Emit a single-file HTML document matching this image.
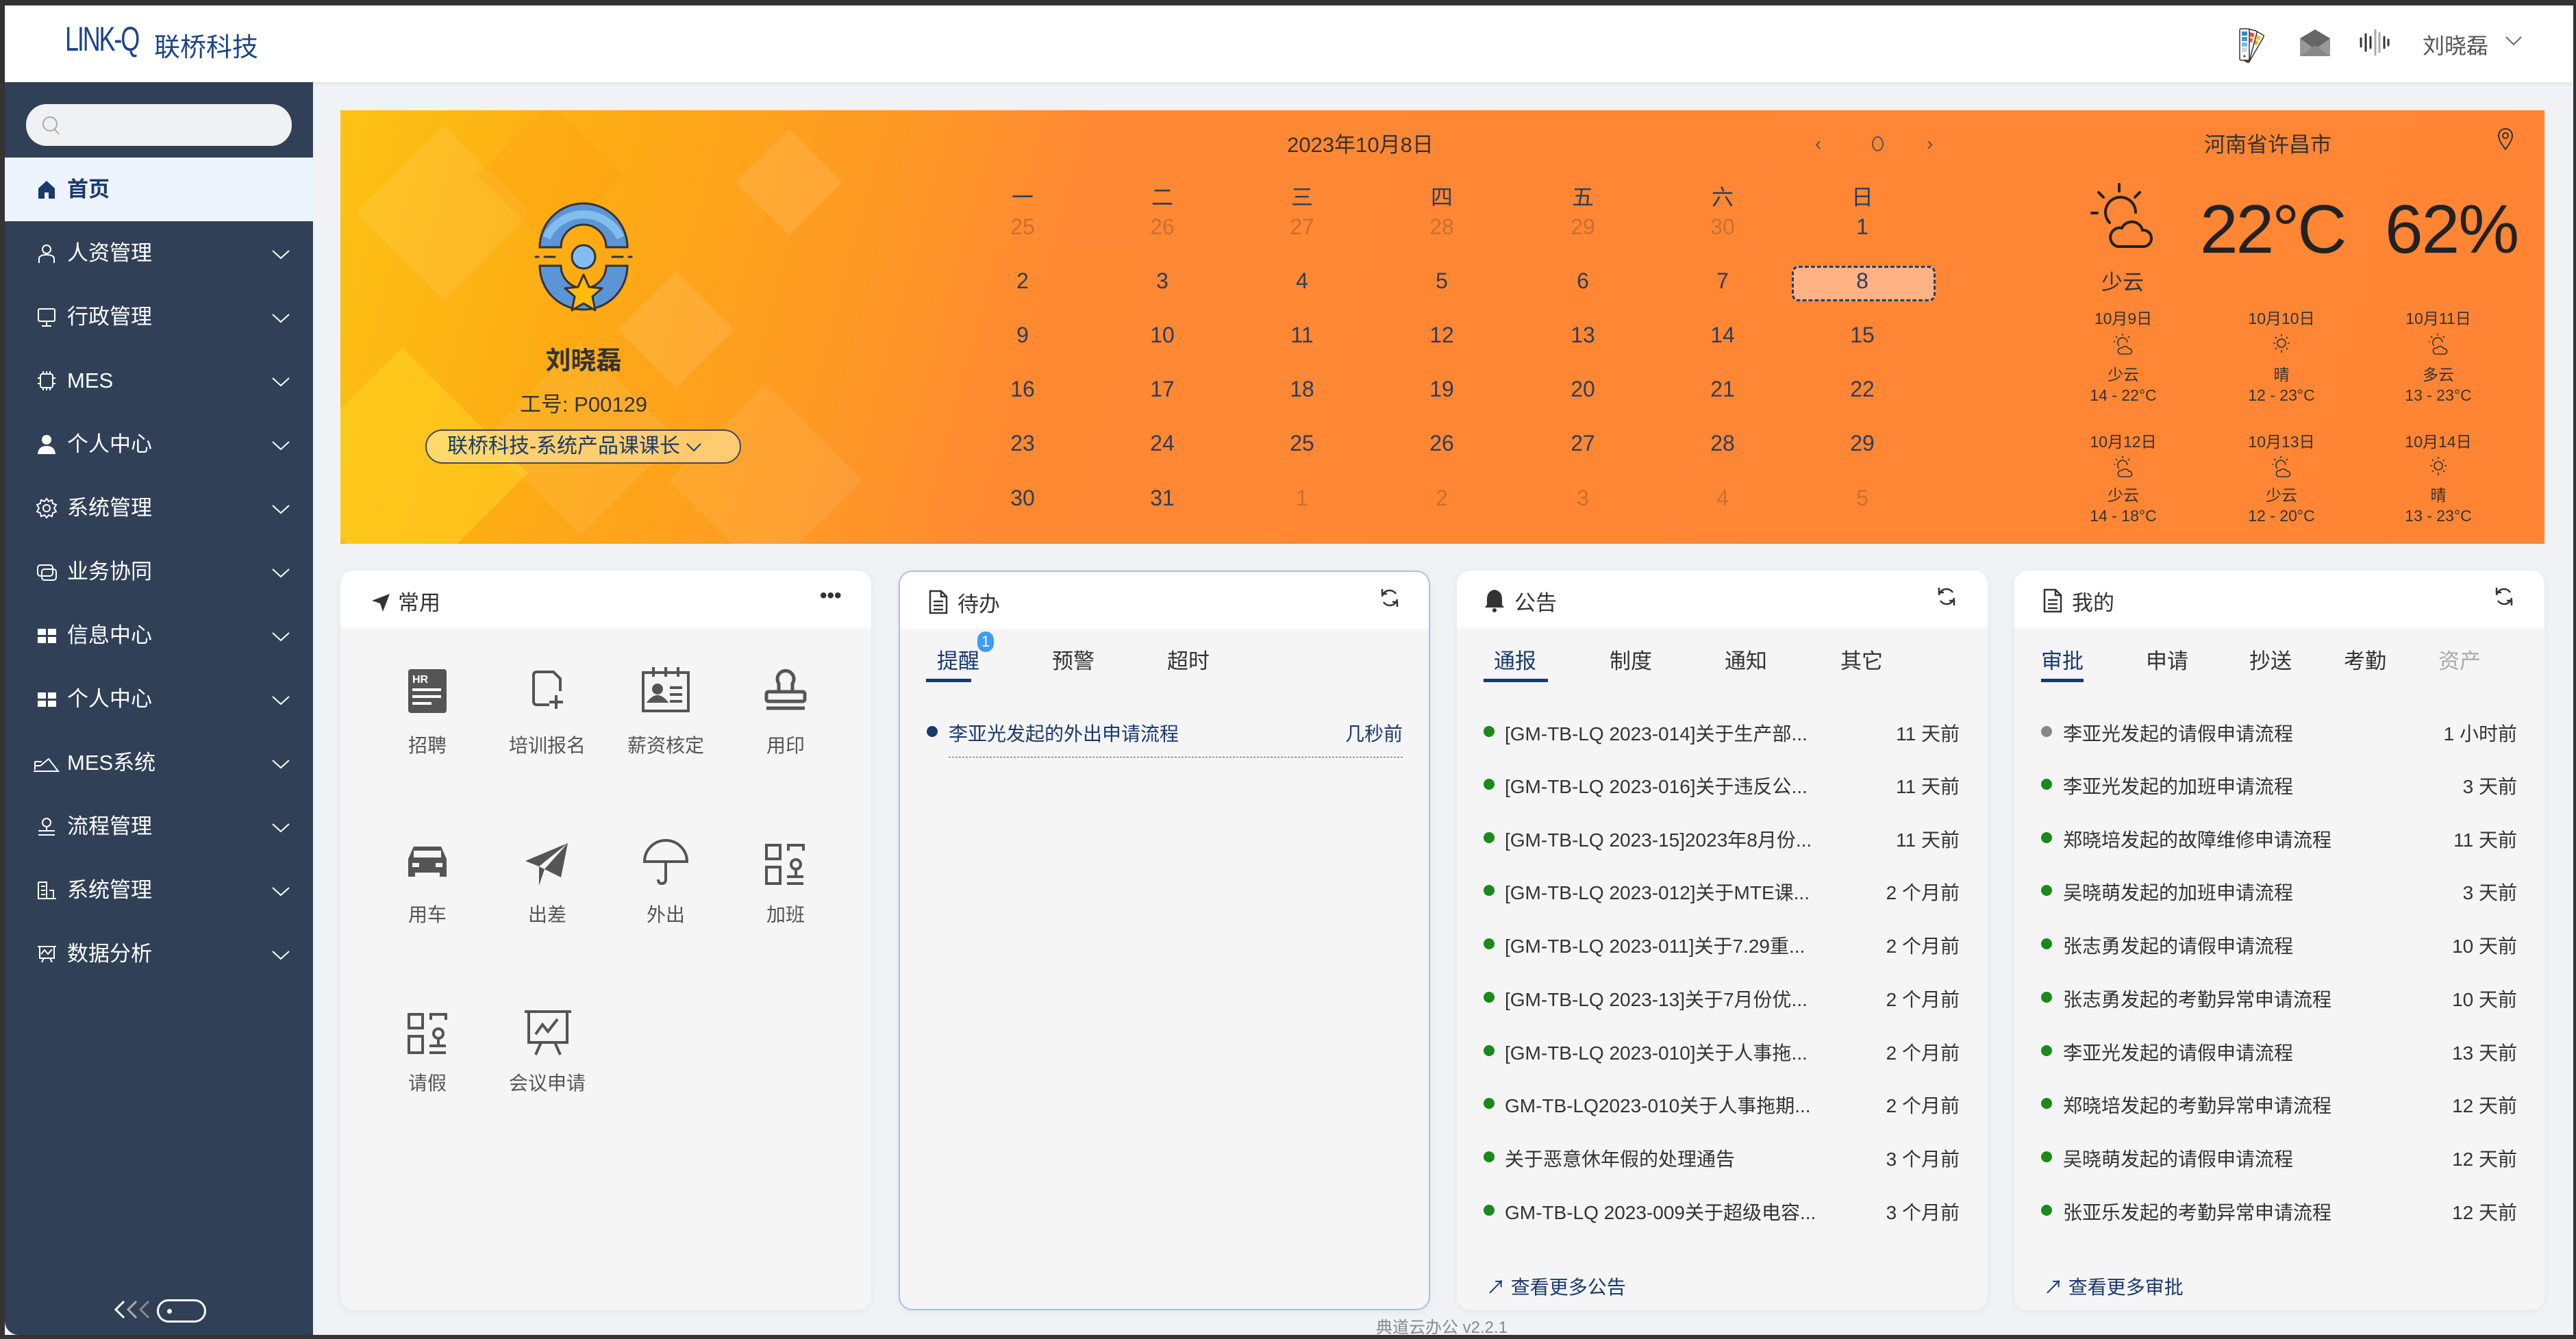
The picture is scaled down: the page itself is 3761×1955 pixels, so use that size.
<!DOCTYPE html>
<html><head><meta charset="utf-8"><style>
*{margin:0;padding:0;box-sizing:border-box}
body{width:3761px;height:1955px;background:#333;position:relative;overflow:hidden;font-family:"Liberation Sans","Noto Sans CJK SC",sans-serif;color:#333}
.a{position:absolute}
#hdr{left:7px;top:8px;width:3750px;height:112px;background:#fff;box-shadow:0 2px 6px rgba(0,0,0,.08);z-index:2}
#main{left:7px;top:120px;width:3750px;height:1829px;background:#f0f2f5}
#side{left:7px;top:120px;width:450px;height:1829px;background:#304057;border-bottom-left-radius:20px}
.mi{position:absolute;left:0;width:450px;height:93px;color:#fff;font-size:31px;line-height:93px}
.mi .t{position:absolute;left:91px}
.mi .ic{position:absolute;left:45px;top:31px;width:32px;height:32px}
.mi .ch{position:absolute;left:390px;top:42px;width:26px;height:14px}
.cal{position:absolute;width:120px;text-align:center;font-size:32px;color:#2c3e5c;margin-left:-60px}
.om{color:#c9702e}
.card{position:absolute;top:833px;height:1080px;background:#f5f5f5;border-radius:20px;box-shadow:0 2px 10px rgba(0,0,0,.06);overflow:hidden}
.ch1{position:absolute;left:0;top:0;right:0;height:83px;background:#fff}
.ttl{position:absolute;left:84px;top:22px;font-size:31px;color:#333}
.tab{position:absolute;top:940px;font-size:31px;color:#333}
.row{position:absolute;font-size:28px;color:#333;white-space:nowrap}
.dot{position:absolute;width:16px;height:16px;border-radius:50%;background:#1a8a1a}
.tm{position:absolute;font-size:28px;color:#333;text-align:right;white-space:nowrap}
.gi{position:absolute;width:160px;text-align:center;font-size:28px;color:#555;margin-left:-80px}
.wf{position:absolute;width:160px;margin-left:-80px;text-align:center;font-size:23px;color:#333}
.wi{position:absolute;margin-left:-15px}
</style></head><body>
<div id="hdr" class="a">
 <div class="a" style="left:88px;top:20px;font-size:50px;color:#1c4488;letter-spacing:-3px;transform:scaleX(.72);transform-origin:left">LINK-Q</div>
 <div class="a" style="left:218px;top:30px;font-size:38px;color:#1c4488;">联桥科技</div>
 <svg class="a" style="left:3259px;top:30px" width="48" height="56" viewBox="0 0 48 56"><g transform="rotate(30 10 50)"><rect x="4" y="4" width="14" height="46" rx="2" fill="#fff" stroke="#333" stroke-width="1.5"/><rect x="7" y="8" width="8" height="6" fill="#f4c430"/><rect x="7" y="16" width="8" height="6" fill="#f4a300"/></g><g transform="rotate(15 10 50)"><rect x="4" y="4" width="14" height="46" rx="2" fill="#fff" stroke="#333" stroke-width="1.5"/><rect x="7" y="8" width="8" height="6" fill="#e8542a"/><rect x="7" y="16" width="8" height="6" fill="#ea6b3a"/></g><rect x="4" y="4" width="14" height="46" rx="2" fill="#fff" stroke="#333" stroke-width="1.5"/><rect x="7" y="8" width="8" height="6" fill="#2e8ad8"/><rect x="7" y="16" width="8" height="6" fill="#3d97de"/><rect x="7" y="24" width="8" height="6" fill="#7ab8ec"/><rect x="7" y="32" width="8" height="6" fill="#c9d8e6"/><circle cx="11" cy="44" r="1.5" fill="#333"/></svg>
 <svg class="a" style="left:3350px;top:34px" width="46" height="42" viewBox="0 0 46 42"><path d="M1 14 L23 1 L45 14 V40 H1 Z" fill="#666"/><path d="M1 14 L23 30 L45 14 V40 H1Z" fill="#999"/><path d="M1 40 L23 24 L45 40Z" fill="#888"/></svg>
 <svg class="a" style="left:3438px;top:34px" width="44" height="40" viewBox="0 0 44 40"><g stroke="#333" stroke-width="3" stroke-linecap="round"><line x1="2" y1="14" x2="2" y2="26"/><line x1="9" y1="8" x2="9" y2="32"/><line x1="16" y1="12" x2="16" y2="28"/><line x1="36" y1="12" x2="36" y2="28"/><line x1="42" y1="16" x2="42" y2="24"/></g><g stroke="#aaa" stroke-width="3" stroke-linecap="round"><line x1="23" y1="2" x2="23" y2="38"/><line x1="29" y1="6" x2="29" y2="34"/></g></svg>
 <div class="a" style="left:3530px;top:34px;font-size:32px;color:#555">刘晓磊</div>
 <svg class="a" style="left:3650px;top:44px" width="26" height="16"><path d="M2 2 L13 13 L24 2" fill="none" stroke="#666" stroke-width="2"/></svg>
</div>
<div id="main" class="a"></div>
<div id="side" class="a">
 <div class="a" style="left:31px;top:32px;width:388px;height:61px;background:#f0f1f3;border-radius:30px"></div>
 <svg class="a" style="left:53px;top:48px" width="30" height="32"><circle cx="13" cy="13" r="10" fill="none" stroke="#aaa" stroke-width="2"/><line x1="20" y1="21" x2="26" y2="28" stroke="#aaa" stroke-width="2"/></svg>
 <div class="mi" style="top:110px;background:#eef4fd;color:#1a3a6e;font-weight:bold"><svg class="ic" viewBox="0 0 32 32"><path d="M4 14 L16 3 L28 14 V29 H19 V20 H13 V29 H4Z" fill="#1a3a6e"/></svg><span class="t">首页</span></div>
</div>
<div class="a" style="left:7px;top:120px;width:450px;height:1829px">
 <div class="mi" style="top:203px"><svg class="ic" viewBox="0 0 32 32" fill="none" stroke="#fff" stroke-width="2"><circle cx="16" cy="10" r="6"/><path d="M5 30 V24 Q5 18 16 18 Q27 18 27 24 V30"/></svg><span class="t">人资管理</span><svg class="ch"><path d="M1 1 L13 12 L25 1" fill="none" stroke="#fff" stroke-width="2"/></svg></div>
 <div class="mi" style="top:296px"><svg class="ic" viewBox="0 0 32 32" fill="none" stroke="#fff" stroke-width="2"><rect x="4" y="4" width="24" height="18" rx="2"/><path d="M16 22 V28 M9 29 H23"/></svg><span class="t">行政管理</span><svg class="ch"><path d="M1 1 L13 12 L25 1" fill="none" stroke="#fff" stroke-width="2"/></svg></div>
 <div class="mi" style="top:389px"><svg class="ic" viewBox="0 0 32 32" fill="none" stroke="#fff" stroke-width="2"><rect x="7" y="6" width="18" height="20" rx="3"/><path d="M11 2V6M16 2V6M21 2V6M11 26V30M16 26V30M21 26V30M3 12H7M3 20H7M25 12H29M25 20H29"/></svg><span class="t">MES</span><svg class="ch"><path d="M1 1 L13 12 L25 1" fill="none" stroke="#fff" stroke-width="2"/></svg></div>
 <div class="mi" style="top:482px"><svg class="ic" viewBox="0 0 32 32" fill="#fff"><circle cx="16" cy="9" r="7"/><path d="M3 30 Q4 18 16 18 Q28 18 29 30Z"/></svg><span class="t">个人中心</span><svg class="ch"><path d="M1 1 L13 12 L25 1" fill="none" stroke="#fff" stroke-width="2"/></svg></div>
 <div class="mi" style="top:575px"><svg class="ic" viewBox="0 0 32 32" fill="none" stroke="#fff" stroke-width="2"><circle cx="16" cy="16" r="5"/><path d="M16 2 L19 6 L24 4 L25 9 L30 11 L27 16 L30 21 L25 23 L24 28 L19 26 L16 30 L13 26 L8 28 L7 23 L2 21 L5 16 L2 11 L7 9 L8 4 L13 6Z"/></svg><span class="t">系统管理</span><svg class="ch"><path d="M1 1 L13 12 L25 1" fill="none" stroke="#fff" stroke-width="2"/></svg></div>
 <div class="mi" style="top:668px"><svg class="ic" viewBox="0 0 32 32" fill="none" stroke="#fff" stroke-width="2"><rect x="3" y="6" width="22" height="16" rx="4"/><rect x="9" y="12" width="21" height="16" rx="4"/></svg><span class="t">业务协同</span><svg class="ch"><path d="M1 1 L13 12 L25 1" fill="none" stroke="#fff" stroke-width="2"/></svg></div>
 <div class="mi" style="top:761px"><svg class="ic" viewBox="0 0 32 32" fill="#fff"><rect x="3" y="6" width="12" height="9"/><rect x="18" y="6" width="12" height="9"/><rect x="3" y="18" width="12" height="9"/><rect x="18" y="18" width="12" height="9"/></svg><span class="t">信息中心</span><svg class="ch"><path d="M1 1 L13 12 L25 1" fill="none" stroke="#fff" stroke-width="2"/></svg></div>
 <div class="mi" style="top:854px"><svg class="ic" viewBox="0 0 32 32" fill="#fff"><rect x="3" y="6" width="12" height="9"/><rect x="18" y="6" width="12" height="9"/><rect x="3" y="18" width="12" height="9"/><rect x="18" y="18" width="12" height="9"/></svg><span class="t">个人中心</span><svg class="ch"><path d="M1 1 L13 12 L25 1" fill="none" stroke="#fff" stroke-width="2"/></svg></div>
 <div class="mi" style="top:947px"><svg class="ic" viewBox="0 0 40 32" style="left:40px;width:40px" fill="none" stroke="#fff" stroke-width="2"><path d="M2 28 H38 L24 10 L12 20 M4 14 H14 M4 20 H12 M4 26 V14"/></svg><span class="t">MES系统</span><svg class="ch"><path d="M1 1 L13 12 L25 1" fill="none" stroke="#fff" stroke-width="2"/></svg></div>
 <div class="mi" style="top:1040px"><svg class="ic" viewBox="0 0 32 32" fill="none" stroke="#fff" stroke-width="2"><circle cx="16" cy="10" r="6"/><path d="M16 16 V22 M4 22 H28 M4 28 H28"/></svg><span class="t">流程管理</span><svg class="ch"><path d="M1 1 L13 12 L25 1" fill="none" stroke="#fff" stroke-width="2"/></svg></div>
 <div class="mi" style="top:1133px"><svg class="ic" viewBox="0 0 32 32" fill="none" stroke="#fff" stroke-width="2"><path d="M4 4 V28 H30 M4 4 H16 V28 M8 10 H14 M8 16 H14 M8 22 H14 M20 16 H26 V28"/></svg><span class="t">系统管理</span><svg class="ch"><path d="M1 1 L13 12 L25 1" fill="none" stroke="#fff" stroke-width="2"/></svg></div>
 <div class="mi" style="top:1226px"><svg class="ic" viewBox="0 0 32 32" fill="none" stroke="#fff" stroke-width="2"><path d="M3 5 H30 M6 5 V22 H27 V5 M8 16 L13 10 L18 16 L24 9 M12 22 L9 28 M21 22 L24 28"/></svg><span class="t">数据分析</span><svg class="ch"><path d="M1 1 L13 12 L25 1" fill="none" stroke="#fff" stroke-width="2"/></svg></div>
 <svg class="a" style="left:158px;top:1777px" width="60" height="30" fill="none" stroke-width="3"><path d="M16 3 L4 15 L16 27" stroke="#fff"/><path d="M34 3 L22 15 L34 27" stroke="#aaa"/><path d="M52 3 L40 15 L52 27" stroke="#888"/></svg>
 <div class="a" style="left:222px;top:1777px;width:72px;height:34px;border:3px solid #fff;border-radius:17px"><div class="a" style="left:12px;top:11px;width:7px;height:7px;border-radius:50%;background:#fff"></div></div>
</div>

<!-- banner -->
<div class="a" style="left:497px;top:161px;width:3218px;height:633px;overflow:hidden;background:linear-gradient(105deg,#fdc214 0%,#fdab14 12%,#fe9a24 24%,#ff8834 33%,#ff8534 100%)">
 <div class="a" style="left:60px;top:60px;width:180px;height:180px;transform:rotate(45deg);background:rgba(255,255,255,.08)"></div>
 <div class="a" style="left:230px;top:20px;width:150px;height:150px;transform:rotate(45deg);background:rgba(255,160,20,.3)"></div>
 <div class="a" style="left:430px;top:260px;width:120px;height:120px;transform:rotate(45deg);background:rgba(255,255,255,.1)"></div>
 <div class="a" style="left:600px;top:50px;width:110px;height:110px;transform:rotate(45deg);background:rgba(255,255,255,.1)"></div>
 <div class="a" style="left:-40px;top:400px;width:260px;height:260px;transform:rotate(45deg);background:rgba(255,230,40,.35)"></div>
 <div class="a" style="left:520px;top:440px;width:200px;height:200px;transform:rotate(45deg);background:rgba(255,255,255,.07)"></div>
 <div class="a" style="left:250px;top:380px;width:200px;height:200px;transform:rotate(45deg);background:rgba(255,255,255,.07)"></div>
 <div class="a" style="left:900px;top:200px;width:220px;height:400px;transform:skewX(-15deg);background:rgba(255,140,40,.25)"></div>
</div>
<svg class="a" style="left:752px;top:273px" width="200" height="200" viewBox="0 0 200 200">
 <path d="M36 88 A64 64 0 0 1 164 88 H133 A33 33 0 0 0 67 88Z" fill="#5b95d5" stroke="#333" stroke-width="3"/>
 <path d="M46 74 A60 60 0 0 1 154 74" fill="none" stroke="#82bdef" stroke-width="12"/>
 <path d="M36 115 A64 64 0 0 0 164 115 H133 A33 33 0 0 1 67 115Z" fill="#5b95d5" stroke="#333" stroke-width="3"/>
 <circle cx="100" cy="102" r="17" fill="#82bdef" stroke="#333" stroke-width="3"/>
 <path d="M30 102H34M43 102H58M142 102H157M166 102H170" stroke="#333" stroke-width="3" stroke-linecap="round"/>
 <path d="M100 128 L108 146 L127 148 L113 160 L117 180 L100 170 L83 180 L87 160 L73 148 L92 146Z" fill="#fcbc07" stroke="#333" stroke-width="3" stroke-linejoin="round"/>
</svg>
<div class="a" style="left:752px;top:496px;width:200px;text-align:center;font-size:37px;font-weight:bold;color:#333">刘晓磊</div>
<div class="a" style="left:702px;top:565px;width:300px;text-align:center;font-size:31px;color:#333">工号: P00129</div>
<div class="a" style="left:621px;top:627px;width:461px;height:50px;border:2px solid #3a4a6a;border-radius:25px;background:rgba(255,235,170,.55);font-size:30px;color:#1a3a6e;line-height:46px;padding-left:30px">联桥科技-系统产品课课长 <svg width="24" height="16"><path d="M2 3 L12 13 L22 3" fill="none" stroke="#1a3a6e" stroke-width="2"/></svg></div>

<!-- calendar -->
<div class="a" style="left:1836px;top:186px;width:300px;text-align:center;font-size:31px;color:#333">2023年10月8日</div>
<div class="a" style="left:2650px;top:194px;font-size:28px;color:#555">‹</div>
<div class="a" style="left:2733px;top:199px;width:17px;height:22px;border:2px solid #555;border-radius:50%"></div>
<div class="a" style="left:2813px;top:194px;font-size:28px;color:#555">›</div>
<div class="a" style="left:2616px;top:388px;width:210px;height:52px;background:#ffb385;border:3px dashed #2c3e5c;border-radius:10px"></div>
<div class="a" style="left:0;top:0">
<div class="cal" style="left:1493px;top:263px">一</div><div class="cal" style="left:1697px;top:263px">二</div><div class="cal" style="left:1901px;top:263px">三</div><div class="cal" style="left:2105px;top:263px">四</div><div class="cal" style="left:2311px;top:263px">五</div><div class="cal" style="left:2515px;top:263px">六</div><div class="cal" style="left:2719px;top:263px">日</div>
<div class="cal om" style="left:1493px;top:313px">25</div><div class="cal om" style="left:1697px;top:313px">26</div><div class="cal om" style="left:1901px;top:313px">27</div><div class="cal om" style="left:2105px;top:313px">28</div><div class="cal om" style="left:2311px;top:313px">29</div><div class="cal om" style="left:2515px;top:313px">30</div><div class="cal" style="left:2719px;top:313px">1</div>
<div class="cal" style="left:1493px;top:392px">2</div><div class="cal" style="left:1697px;top:392px">3</div><div class="cal" style="left:1901px;top:392px">4</div><div class="cal" style="left:2105px;top:392px">5</div><div class="cal" style="left:2311px;top:392px">6</div><div class="cal" style="left:2515px;top:392px">7</div><div class="cal" style="left:2719px;top:392px">8</div>
<div class="cal" style="left:1493px;top:471px">9</div><div class="cal" style="left:1697px;top:471px">10</div><div class="cal" style="left:1901px;top:471px">11</div><div class="cal" style="left:2105px;top:471px">12</div><div class="cal" style="left:2311px;top:471px">13</div><div class="cal" style="left:2515px;top:471px">14</div><div class="cal" style="left:2719px;top:471px">15</div>
<div class="cal" style="left:1493px;top:550px">16</div><div class="cal" style="left:1697px;top:550px">17</div><div class="cal" style="left:1901px;top:550px">18</div><div class="cal" style="left:2105px;top:550px">19</div><div class="cal" style="left:2311px;top:550px">20</div><div class="cal" style="left:2515px;top:550px">21</div><div class="cal" style="left:2719px;top:550px">22</div>
<div class="cal" style="left:1493px;top:629px">23</div><div class="cal" style="left:1697px;top:629px">24</div><div class="cal" style="left:1901px;top:629px">25</div><div class="cal" style="left:2105px;top:629px">26</div><div class="cal" style="left:2311px;top:629px">27</div><div class="cal" style="left:2515px;top:629px">28</div><div class="cal" style="left:2719px;top:629px">29</div>
<div class="cal" style="left:1493px;top:709px">30</div><div class="cal" style="left:1697px;top:709px">31</div><div class="cal om" style="left:1901px;top:709px">1</div><div class="cal om" style="left:2105px;top:709px">2</div><div class="cal om" style="left:2311px;top:709px">3</div><div class="cal om" style="left:2515px;top:709px">4</div><div class="cal om" style="left:2719px;top:709px">5</div>
</div>

<!-- weather -->
<div class="a" style="left:3161px;top:186px;width:300px;text-align:center;font-size:31px;color:#333">河南省许昌市</div>
<svg class="a" style="left:3645px;top:186px" width="26" height="34"><path d="M13 32 C4 20 3 16 3 12 A10 10 0 0 1 23 12 C23 16 22 20 13 32Z" fill="none" stroke="#333" stroke-width="2"/><circle cx="13" cy="12" r="4" fill="none" stroke="#333" stroke-width="2"/></svg>
<svg class="a" style="left:3050px;top:265px" width="100" height="100" viewBox="0 0 100 100" fill="none" stroke="#222" stroke-width="4" stroke-linecap="round"><path d="M30 60 A22 22 0 1 1 68 45"/><path d="M44 4V14M14 16L21 23M74 16L67 23M4 46H12"/><path d="M42 95 H80 A12 12 0 0 0 78 71 A16 16 0 0 0 48 68 A13 13 0 0 0 42 95Z"/></svg>
<div class="a" style="left:3212px;top:278px;font-size:100px;color:#222;letter-spacing:-3px">22°C</div>
<div class="a" style="left:3482px;top:278px;font-size:100px;color:#222;letter-spacing:-2px">62%</div>
<div class="a" style="left:3068px;top:387px;font-size:31px;color:#333">少云</div>
<div class="wf" style="left:3100px;top:446px">10月9日</div><div class="wf" style="left:3331px;top:446px">10月10日</div><div class="wf" style="left:3560px;top:446px">10月11日</div>
<div class="wf" style="left:3100px;top:528px">少云</div><div class="wf" style="left:3331px;top:528px">晴</div><div class="wf" style="left:3560px;top:528px">多云</div>
<div class="wf" style="left:3100px;top:564px">14 - 22°C</div><div class="wf" style="left:3331px;top:564px">12 - 23°C</div><div class="wf" style="left:3560px;top:564px">13 - 23°C</div>
<div class="wf" style="left:3100px;top:626px">10月12日</div><div class="wf" style="left:3331px;top:626px">10月13日</div><div class="wf" style="left:3560px;top:626px">10月14日</div>
<div class="wf" style="left:3100px;top:704px">少云</div><div class="wf" style="left:3331px;top:704px">少云</div><div class="wf" style="left:3560px;top:704px">晴</div>
<div class="wf" style="left:3100px;top:740px">14 - 18°C</div><div class="wf" style="left:3331px;top:740px">12 - 20°C</div><div class="wf" style="left:3560px;top:740px">13 - 23°C</div>
<svg class="wi" style="left:3100px;top:485px" width="30" height="34" viewBox="0 0 30 34" fill="none" stroke="#333" stroke-width="1.6"><path d="M9 20 A7 7 0 1 1 21 15"/><path d="M14 2V5M4 6L6 8M24 6L22 8M1 14H3"/><path d="M11 32H24A4 4 0 0 0 23 24A6 6 0 0 0 13 23A4.5 4.5 0 0 0 11 32Z"/></svg>
<svg class="wi" style="left:3331px;top:485px" width="30" height="34" viewBox="0 0 30 34" fill="none" stroke="#333" stroke-width="1.6"><circle cx="15" cy="16" r="6"/><path d="M15 3V6M15 26V30M3 16H6M24 16H27M6 7L8 9M22 23L24 25M24 7L22 9M6 25L8 23"/></svg>
<svg class="wi" style="left:3560px;top:485px" width="30" height="34" viewBox="0 0 30 34" fill="none" stroke="#333" stroke-width="1.6"><path d="M9 20 A7 7 0 1 1 21 15"/><path d="M14 2V5M4 6L6 8M24 6L22 8M1 14H3"/><path d="M11 32H24A4 4 0 0 0 23 24A6 6 0 0 0 13 23A4.5 4.5 0 0 0 11 32Z"/></svg>
<svg class="wi" style="left:3100px;top:664px" width="30" height="34" viewBox="0 0 30 34" fill="none" stroke="#333" stroke-width="1.6"><path d="M9 20 A7 7 0 1 1 21 15"/><path d="M14 2V5M4 6L6 8M24 6L22 8M1 14H3"/><path d="M11 32H24A4 4 0 0 0 23 24A6 6 0 0 0 13 23A4.5 4.5 0 0 0 11 32Z"/></svg>
<svg class="wi" style="left:3331px;top:664px" width="30" height="34" viewBox="0 0 30 34" fill="none" stroke="#333" stroke-width="1.6"><path d="M9 20 A7 7 0 1 1 21 15"/><path d="M14 2V5M4 6L6 8M24 6L22 8M1 14H3"/><path d="M11 32H24A4 4 0 0 0 23 24A6 6 0 0 0 13 23A4.5 4.5 0 0 0 11 32Z"/></svg>
<svg class="wi" style="left:3560px;top:664px" width="30" height="34" viewBox="0 0 30 34" fill="none" stroke="#333" stroke-width="1.6"><circle cx="15" cy="16" r="6"/><path d="M15 3V6M15 26V30M3 16H6M24 16H27M6 7L8 9M22 23L24 25M24 7L22 9M6 25L8 23"/></svg>

<!-- card 1 -->
<div class="card" style="left:497px;width:775px">
 <div class="ch1"></div>
 <svg class="a" style="left:44px;top:32px" width="30" height="30" viewBox="0 0 30 30"><path d="M2 12 L28 2 L18 28 L14 16Z M14 16 L28 2" fill="#333"/></svg>
 <div class="ttl">常用</div>
 <div class="a" style="left:700px;top:20px;font-size:30px;color:#333;font-weight:bold">•••</div>
</div>
<div class="gi" style="left:624px;top:1067px">招聘</div><div class="gi" style="left:799px;top:1067px">培训报名</div><div class="gi" style="left:972px;top:1067px">薪资核定</div><div class="gi" style="left:1147px;top:1067px">用印</div>
<div class="gi" style="left:624px;top:1314px">用车</div><div class="gi" style="left:799px;top:1314px">出差</div><div class="gi" style="left:972px;top:1314px">外出</div><div class="gi" style="left:1147px;top:1314px">加班</div>
<div class="gi" style="left:624px;top:1560px">请假</div><div class="gi" style="left:799px;top:1560px">会议申请</div>
<svg class="a" style="left:594px;top:975px" width="60" height="68"><rect x="2" y="2" width="56" height="64" rx="4" fill="#555"/><text x="8" y="22" font-size="16" font-weight="bold" fill="#fff" font-family="Liberation Sans">HR</text><path d="M8 32H50M8 42H50M8 52H36" stroke="#fff" stroke-width="4"/></svg>
<svg class="a" style="left:776px;top:977px" width="50" height="62" fill="none" stroke="#555" stroke-width="4"><path d="M26 52H8 Q3 52 3 47V9 Q3 4 8 4H32L42 14V32"/><path d="M36 38V58M26 48H46"/></svg>
<svg class="a" style="left:936px;top:972px" width="72" height="70" fill="none" stroke="#555" stroke-width="4"><rect x="3" y="10" width="66" height="56"/><path d="M18 2V16M36 2V16M54 2V16"/><circle cx="24" cy="34" r="6" fill="#555"/><path d="M12 52Q24 38 36 52Z" fill="#555"/><path d="M42 32H60M42 42H60M42 52H60"/></svg>
<svg class="a" style="left:1115px;top:972px" width="64" height="70" fill="none" stroke="#555" stroke-width="5"><path d="M22 36V26A12 12 0 1 1 42 26V36"/><rect x="4" y="38" width="56" height="14" rx="3"/><path d="M4 62H60"/></svg>
<svg class="a" style="left:592px;top:1232px" width="64" height="52"><path d="M12 4H52L60 22V48H50V42H14V48H4V22Z" fill="#555"/><rect x="12" y="10" width="40" height="10" fill="#f5f5f5"/><rect x="10" y="28" width="10" height="6" fill="#f5f5f5"/><rect x="44" y="28" width="10" height="6" fill="#f5f5f5"/></svg>
<svg class="a" style="left:765px;top:1229px" width="66" height="66"><path d="M64 2 L2 28 L22 36Z M64 2 L30 40 L54 52Z M22 36 L22 64 L30 40Z" fill="#555"/></svg>
<svg class="a" style="left:937px;top:1224px" width="70" height="70" fill="none" stroke="#555" stroke-width="4"><path d="M4 34 A31 31 0 0 1 66 34 Z"/><path d="M35 34 V60 Q35 66 29 66 Q24 66 24 60"/></svg>
<svg class="a" style="left:1117px;top:1232px" width="58" height="62" fill="none" stroke="#555" stroke-width="4"><rect x="2" y="2" width="20" height="20"/><rect x="2" y="34" width="20" height="24"/><path d="M34 10V2H56V10"/><circle cx="45" cy="30" r="7"/><path d="M45 37V48M32 48H56M32 58H56"/></svg>
<svg class="a" style="left:595px;top:1479px" width="58" height="62" fill="none" stroke="#555" stroke-width="4"><rect x="2" y="2" width="20" height="20"/><rect x="2" y="34" width="20" height="24"/><path d="M34 10V2H56V10"/><circle cx="45" cy="30" r="7"/><path d="M45 37V48M32 48H56M32 58H56"/></svg>
<svg class="a" style="left:764px;top:1474px" width="72" height="70" fill="none" stroke="#555" stroke-width="4"><path d="M2 3H70M8 3V48H64V3"/><path d="M18 36L28 22L36 32L50 14"/><path d="M26 48L18 66M46 48L54 66"/></svg>

<!-- card 2 -->
<div class="card" style="left:1312px;width:776px;border:2px solid #a9c1e3">
 <div class="ch1"></div>
 <svg class="a" style="left:42px;top:26px" width="28" height="36" fill="none" stroke="#333" stroke-width="2.5"><path d="M2 2H18L26 10V34H2Z M18 2V10H26 M7 17H21M7 23H21M7 29H21"/></svg>
 <div class="ttl">待办</div>
 <svg class="a" style="left:700px;top:22px" width="30" height="32" fill="none" stroke="#333" stroke-width="2.5"><path d="M24 10 A11 11 0 0 0 4 14 M4 3V10H11 M6 22 A11 11 0 0 0 26 18 M26 29V22H19"/></svg>
</div>
<div class="tab" style="left:1368px;color:#1a3a6e">提醒</div>
<div class="a" style="left:1427px;top:922px;width:24px;height:30px;border-radius:12px;background:#3d9cf5;color:#fff;font-size:22px;text-align:center;line-height:30px">1</div>
<div class="a" style="left:1352px;top:991px;width:66px;height:5px;background:#1a3a6e"></div>
<div class="tab" style="left:1536px">预警</div>
<div class="tab" style="left:1704px">超时</div>
<div class="a" style="left:1353px;top:1060px;width:16px;height:16px;border-radius:50%;background:#1a3a6e"></div>
<div class="row" style="left:1385px;top:1050px;color:#1a3a6e">李亚光发起的外出申请流程</div>
<div class="tm" style="left:1900px;width:148px;top:1050px;color:#1a3a6e">几秒前</div>
<div class="a" style="left:1385px;top:1105px;width:663px;border-top:1px dashed #555"></div>

<!-- card 3 -->
<div class="card" style="left:2127px;width:775px">
 <div class="ch1"></div>
 <svg class="a" style="left:40px;top:26px" width="30" height="36"><path d="M15 2 Q4 4 4 16 V24 L1 28 H29 L26 24 V16 Q26 4 15 2Z" fill="#333"/><circle cx="15" cy="32" r="3" fill="#333"/></svg>
 <div class="ttl">公告</div>
 <svg class="a" style="left:700px;top:22px" width="30" height="32" fill="none" stroke="#333" stroke-width="2.5"><path d="M24 10 A11 11 0 0 0 4 14 M4 3V10H11 M6 22 A11 11 0 0 0 26 18 M26 29V22H19"/></svg>
</div>
<div class="tab" style="left:2181px;color:#1a3a6e">通报</div>
<div class="a" style="left:2166px;top:991px;width:94px;height:5px;background:#1a3a6e"></div>
<div class="tab" style="left:2350px">制度</div>
<div class="tab" style="left:2518px">通知</div>
<div class="tab" style="left:2687px">其它</div>

<!-- card 4 -->
<div class="card" style="left:2941px;width:774px">
 <div class="ch1"></div>
 <svg class="a" style="left:42px;top:26px" width="28" height="36" fill="none" stroke="#333" stroke-width="2.5"><path d="M2 2H18L26 10V34H2Z M18 2V10H26 M7 17H21M7 23H21M7 29H21"/></svg>
 <div class="ttl">我的</div>
 <svg class="a" style="left:700px;top:22px" width="30" height="32" fill="none" stroke="#333" stroke-width="2.5"><path d="M24 10 A11 11 0 0 0 4 14 M4 3V10H11 M6 22 A11 11 0 0 0 26 18 M26 29V22H19"/></svg>
</div>
<div class="tab" style="left:2980px;color:#1a3a6e">审批</div>
<div class="a" style="left:2980px;top:991px;width:62px;height:5px;background:#1a3a6e"></div>
<div class="tab" style="left:3133px">申请</div>
<div class="tab" style="left:3284px">抄送</div>
<div class="tab" style="left:3422px">考勤</div>
<div class="tab" style="left:3560px;color:#aaa">资产</div>

<div class="a" style="left:0;top:0">
<div class="dot" style="left:2166px;top:1060px"></div><div class="row" style="left:2197px;top:1050px">[GM-TB-LQ 2023-014]关于生产部...</div><div class="tm" style="left:2700px;width:161px;top:1050px">11 天前</div>
<div class="dot" style="left:2166px;top:1137px"></div><div class="row" style="left:2197px;top:1127px">[GM-TB-LQ 2023-016]关于违反公...</div><div class="tm" style="left:2700px;width:161px;top:1127px">11 天前</div>
<div class="dot" style="left:2166px;top:1215px"></div><div class="row" style="left:2197px;top:1205px">[GM-TB-LQ 2023-15]2023年8月份...</div><div class="tm" style="left:2700px;width:161px;top:1205px">11 天前</div>
<div class="dot" style="left:2166px;top:1292px"></div><div class="row" style="left:2197px;top:1282px">[GM-TB-LQ 2023-012]关于MTE课...</div><div class="tm" style="left:2700px;width:161px;top:1282px">2 个月前</div>
<div class="dot" style="left:2166px;top:1370px"></div><div class="row" style="left:2197px;top:1360px">[GM-TB-LQ 2023-011]关于7.29重...</div><div class="tm" style="left:2700px;width:161px;top:1360px">2 个月前</div>
<div class="dot" style="left:2166px;top:1448px"></div><div class="row" style="left:2197px;top:1438px">[GM-TB-LQ 2023-13]关于7月份优...</div><div class="tm" style="left:2700px;width:161px;top:1438px">2 个月前</div>
<div class="dot" style="left:2166px;top:1526px"></div><div class="row" style="left:2197px;top:1516px">[GM-TB-LQ 2023-010]关于人事拖...</div><div class="tm" style="left:2700px;width:161px;top:1516px">2 个月前</div>
<div class="dot" style="left:2166px;top:1603px"></div><div class="row" style="left:2197px;top:1593px">GM-TB-LQ2023-010关于人事拖期...</div><div class="tm" style="left:2700px;width:161px;top:1593px">2 个月前</div>
<div class="dot" style="left:2166px;top:1681px"></div><div class="row" style="left:2197px;top:1671px">关于恶意休年假的处理通告</div><div class="tm" style="left:2700px;width:161px;top:1671px">3 个月前</div>
<div class="dot" style="left:2166px;top:1759px"></div><div class="row" style="left:2197px;top:1749px">GM-TB-LQ 2023-009关于超级电容...</div><div class="tm" style="left:2700px;width:161px;top:1749px">3 个月前</div>
<div class="row" style="left:2170px;top:1858px;color:#1a3a6e">↗ 查看更多公告</div>

<div class="dot" style="left:2980px;top:1060px;background:#888"></div><div class="row" style="left:3012px;top:1050px">李亚光发起的请假申请流程</div><div class="tm" style="left:3500px;width:175px;top:1050px">1 小时前</div>
<div class="dot" style="left:2980px;top:1137px"></div><div class="row" style="left:3012px;top:1127px">李亚光发起的加班申请流程</div><div class="tm" style="left:3500px;width:175px;top:1127px">3 天前</div>
<div class="dot" style="left:2980px;top:1215px"></div><div class="row" style="left:3012px;top:1205px">郑晓培发起的故障维修申请流程</div><div class="tm" style="left:3500px;width:175px;top:1205px">11 天前</div>
<div class="dot" style="left:2980px;top:1292px"></div><div class="row" style="left:3012px;top:1282px">吴晓萌发起的加班申请流程</div><div class="tm" style="left:3500px;width:175px;top:1282px">3 天前</div>
<div class="dot" style="left:2980px;top:1370px"></div><div class="row" style="left:3012px;top:1360px">张志勇发起的请假申请流程</div><div class="tm" style="left:3500px;width:175px;top:1360px">10 天前</div>
<div class="dot" style="left:2980px;top:1448px"></div><div class="row" style="left:3012px;top:1438px">张志勇发起的考勤异常申请流程</div><div class="tm" style="left:3500px;width:175px;top:1438px">10 天前</div>
<div class="dot" style="left:2980px;top:1526px"></div><div class="row" style="left:3012px;top:1516px">李亚光发起的请假申请流程</div><div class="tm" style="left:3500px;width:175px;top:1516px">13 天前</div>
<div class="dot" style="left:2980px;top:1603px"></div><div class="row" style="left:3012px;top:1593px">郑晓培发起的考勤异常申请流程</div><div class="tm" style="left:3500px;width:175px;top:1593px">12 天前</div>
<div class="dot" style="left:2980px;top:1681px"></div><div class="row" style="left:3012px;top:1671px">吴晓萌发起的请假申请流程</div><div class="tm" style="left:3500px;width:175px;top:1671px">12 天前</div>
<div class="dot" style="left:2980px;top:1759px"></div><div class="row" style="left:3012px;top:1749px">张亚乐发起的考勤异常申请流程</div><div class="tm" style="left:3500px;width:175px;top:1749px">12 天前</div>
<div class="row" style="left:2984px;top:1858px;color:#1a3a6e">↗ 查看更多审批</div>
</div>
<div class="a" style="left:1905px;top:1918px;width:400px;text-align:center;font-size:24px;color:#888">典道云办公 v2.2.1</div>
</body></html>
